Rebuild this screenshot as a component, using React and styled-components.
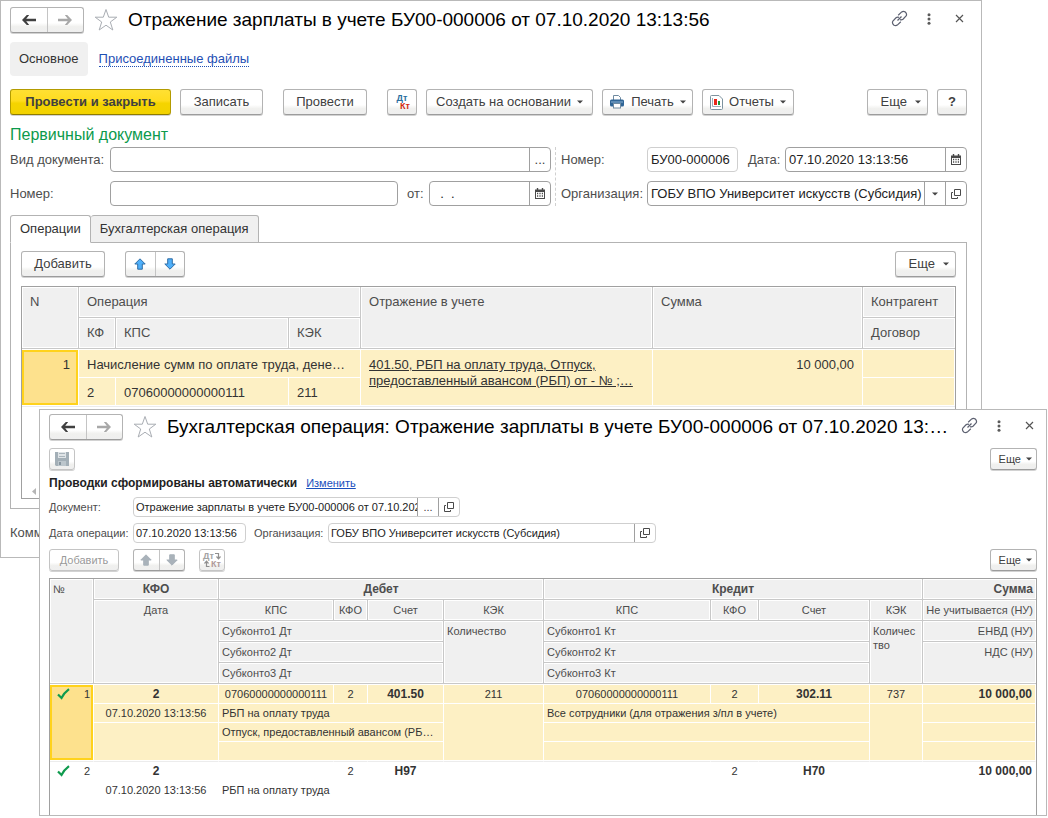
import React from "react";
import styled, { createGlobalStyle, css } from "styled-components";

const GlobalStyle = createGlobalStyle`
  *, *::before, *::after { box-sizing: border-box; }
  body {
    margin: 0;
    background: #fff;
    color: #404040;
    font: 13px/16px "Liberation Sans", Arial, sans-serif;
  }
  button, input, select { font: inherit; color: inherit; margin: 0; }
  button { cursor: pointer; }
`;

/* ---------- windows ---------- */

const Desktop = styled.main`
  position: relative;
  min-height: 816px;
`;

const Window = styled.section`
  background: #fff;
  border: 1px solid #b9b9b9;
`;

const BackWindow = styled(Window)`
  margin-right: 66px;
  padding: 0 14px 12px 9px;
`;

const FrontWindow = styled(Window)`
  position: absolute;
  top: 409px;
  left: 39px;
  right: 1px;
  padding: 0 9px;
  font-size: 11px;
  line-height: 14px;
`;

const TitleBar = styled.header`
  display: flex;
  align-items: center;
  height: ${(p) => p.$h}px;
`;

const Title = styled.h1`
  flex: 1;
  min-width: 0;
  margin: 0 11px 0 10px;
  overflow: hidden;
  white-space: nowrap;
  text-overflow: ellipsis;
  color: #000;
  font-size: 19px;
  font-weight: 400;
  line-height: 24px;
`;

const WindowTools = styled.div`
  display: flex;
  gap: 12px;
  margin: 0 -1px 3px 0;
`;

const IconButton = styled.button`
  display: grid;
  place-items: center;
  flex: none;
  width: ${(p) => p.$w || 18}px;
  height: ${(p) => p.$h || 18}px;
  padding: 0;
  border: 0;
  background: none;
`;

/* ---------- buttons ---------- */

const Bar = styled.div`
  display: flex;
  align-items: center;
  gap: ${(p) => p.$gap ?? 9}px;
  margin-top: ${(p) => p.$top || 0}px;
`;

const Spacer = styled.div`
  flex: ${(p) => (p.$w ? `0 0 ${p.$w}px` : "1")};
`;

const buttonFace = css`
  border: 1px solid #b3b3b3;
  border-bottom-color: #9c9c9c;
  border-radius: 3px;
  background: linear-gradient(#fff 62%, #f0f0ee 78%, #efefef);
  box-shadow: 0 1px 0 #d2d2d2;
`;

const Button = styled.button`
  ${buttonFace}
  display: flex;
  align-items: center;
  justify-content: center;
  flex: none;
  gap: ${(p) => p.$gap || 6}px;
  width: ${(p) => p.$w}px;
  height: ${(p) => (p.$small ? 22 : 26)}px;
  padding: 0;
  white-space: nowrap;
  ${(p) =>
    p.$primary &&
    css`
      border-color: #b39b00;
      border-bottom-color: #8f7c00;
      background: linear-gradient(#ffe033 0, #ffdc1f 45%, #f5d400 55%, #f2d200);
      font-weight: 700;
    `}
  &:disabled {
    color: #999;
    border-color: #c4c4c4;
    cursor: default;
  }
`;

const MoreButton = styled(Button)`
  justify-content: flex-end;
  padding-right: ${(p) => (p.$small ? 4 : 6)}px;
`;

const ButtonPair = styled.div`
  ${buttonFace}
  display: flex;
  flex: none;
  width: ${(p) => p.$w}px;
  height: ${(p) => (p.$small ? 22 : 26)}px;
  overflow: hidden;
  button {
    display: grid;
    place-items: center;
    flex: 1;
    padding: 0;
    border: 0;
    background: none;
  }
  button + button {
    border-left: 1px solid #c4c4c4;
  }
`;

const DtKt = styled.span`
  display: grid;
  width: 16px;
  font-size: 9px;
  line-height: 8px;
  font-weight: 700;
  span:first-child { color: #2a6e9e; }
  span:last-child { color: #d02a10; justify-self: end; }
`;

/* ---------- navigation and tabs ---------- */

const Nav = styled.nav`
  display: flex;
  align-items: center;
  gap: 11px;
  margin-top: 3px;
`;

const NavCurrent = styled.span`
  padding: 9px;
  border-radius: 4px;
  background: #f0f0f0;
  color: #333;
`;

const NavLink = styled.a`
  color: #1f4fb4;
  text-decoration: none;
  border-bottom: 1px dotted #1f4fb4;
  line-height: 14px;
`;

const TextLink = styled.a`
  color: #1a4fbd;
`;

const SectionTitle = styled.h2`
  margin: 10px 0 2px;
  color: #0c9a4c;
  font-size: 16px;
  font-weight: 400;
  line-height: 20px;
`;

const TabList = styled.div`
  display: flex;
  position: relative;
  margin-top: 9px;
`;

const Tab = styled.button`
  height: 28px;
  margin: 0 0 -1px;
  padding: 0 9px;
  border: 1px solid #b3b3b3;
  border-radius: 3px 3px 0 0;
  background: #f0f0f0;
  color: #333;
  & + & { border-left: 0; }
  ${(p) =>
    p.$active &&
    css`
      background: #fff;
      border-bottom-color: #fff;
    `}
`;

const Panel = styled.div`
  padding: 8px 10px 9px;
  border: 1px solid #b3b3b3;
`;

/* ---------- fields ---------- */

const Form = styled.form`
  display: flex;
  gap: 4px;
`;

const FormColumn = styled.div`
  display: grid;
  gap: 9px;
  flex: ${(p) => (p.$fixed ? "none" : 1)};
  width: ${(p) => (p.$fixed ? "412px" : "auto")};
  padding-left: ${(p) => (p.$fixed ? 5 : 0)}px;
  border-left: ${(p) => (p.$fixed ? "1px dashed #d0d0d0" : 0)};
`;

const FormRow = styled.div`
  display: flex;
  align-items: center;
  margin-top: ${(p) => p.$top || 0}px;
`;

const Label = styled.label`
  flex: none;
  width: ${(p) => (p.$w ? `${p.$w}px` : "auto")};
  margin-left: ${(p) => p.$left || 0}px;
  color: #4d4d4d;
  white-space: nowrap;
`;

const Field = styled.div`
  display: flex;
  flex: ${(p) => (p.$w ? `0 0 ${p.$w}px` : "1")};
  min-width: 0;
  height: ${(p) => (p.$small ? 20 : 25)}px;
  border: 1px solid ${(p) => (p.$readOnly ? "#cfcfcf" : "#a0a0a0")};
  border-radius: 4px;
  background: #fff;
  overflow: hidden;
  button {
    width: 21px;
    height: auto;
    border-left: 1px solid #a0a0a0;
  }
`;

const Input = styled.input`
  flex: 1;
  min-width: 0;
  width: 0;
  padding: 0 0 0 ${(p) => (p.$small ? 2 : 3)}px;
  border: 0;
  outline: 0;
  background: none;
  color: #222;
`;

const SelectBox = styled.div`
  display: grid;
  grid-template-columns: 1fr 21px;
  flex: 1;
  min-width: 0;
  select {
    grid-area: 1 / 1 / 2 / 3;
    min-width: 0;
    padding: 0 0 0 3px;
    border: 0;
    outline: 0;
    background: none;
    color: #222;
    appearance: none;
  }
  span {
    grid-area: 1 / 2;
    display: grid;
    place-items: center;
    border-left: 1px solid #a0a0a0;
    pointer-events: none;
  }
`;

/* ---------- tables ---------- */

const TableFrame = styled.div`
  margin-top: 9px;
  border: 1px solid #a0a0a0;
  ${(p) => p.$open && "min-height: 237px; border-bottom: 0; margin-top: 7px;"}
`;

const Table = styled.table`
  width: 100%;
  table-layout: fixed;
  border-collapse: separate;
  border-spacing: 0;
  tbody tr:first-child td { border-top: 1px solid #fff; }
  tbody + tbody tr:first-child td { border-top: 1px solid #ececec; }
`;

const Th = styled.th`
  height: ${(p) => (p.$small ? 21 : 31)}px;
  padding: ${(p) => (p.$small ? "3px 3px" : "7px 8px")};
  border-right: 1px solid #c8c8c8;
  border-bottom: 1px solid #c8c8c8;
  box-shadow: inset 1px 1px 0 #fff, inset -1px -1px 0 #fff;
  background: #f0f0f0;
  color: #4d4d4d;
  font-size: ${(p) => (p.$strong ? 12 : p.$small ? 11 : 13)}px;
  font-weight: ${(p) => (p.$strong ? 700 : 400)};
  line-height: ${(p) => (p.$small ? 14 : 16)}px;
  text-align: ${(p) => p.$align || "left"};
  vertical-align: top;
  word-break: ${(p) => (p.$breakWord ? "break-all" : "normal")};
  white-space: ${(p) => (p.$breakWord ? "normal" : "nowrap")};
  ${(p) => p.$edge && "border-right: 0;"}
`;

const Td = styled.td`
  padding: ${(p) => (p.$small ? "1px 3px" : "7px 8px 4px")};
  height: ${(p) => (p.$small ? 19 : 28)}px;
  border-right: 1px solid #fff;
  border-bottom: 1px solid #fff;
  background: ${(p) => (p.$selected ? "#fdf0c4" : "#fff")};
  color: #333;
  overflow: hidden;
  font-size: ${(p) => (p.$strong ? 12 : p.$small ? 11 : 13)}px;
  font-weight: ${(p) => (p.$strong ? 700 : 400)};
  line-height: 16px;
  text-align: ${(p) => p.$align || "left"};
  text-overflow: ellipsis;
  vertical-align: top;
  white-space: nowrap;
`;

const CurrentTd = styled(Td)`
  background: #fde18d;
  box-shadow: inset 0 0 0 2px #ffd21c;
`;

const RowNumber = styled.span`
  display: flex;
  align-items: center;
  justify-content: space-between;
  padding-left: 4px;
`;

const Accounts = styled.a`
  display: block;
  color: #333;
  white-space: pre-line;
`;

const ScrollStrip = styled.div`
  height: 92px;
  display: flex;
  align-items: flex-end;
  padding: 0 0 3px 10px;
  border-top: 1px solid #ececec;
`;

const AutoNote = styled.strong`
  margin-right: 3px;
  color: #222;
  font-size: 12px;
`;

/* ---------- icons ---------- */

const ArrowIcon = ({ back }) => (
  <svg width="14" height="10" viewBox="0 0 14 10" fill={back ? "#404040" : "#a8a8a8"}>
    <path transform={back ? undefined : "rotate(180 7 5)"} d="M0 5 4.800 0H7.200L4.200 3.800H14V6.200H4.200L7.200 10H4.800Z" />
  </svg>
);

const StarIcon = () => (
  <svg width="24" height="24" viewBox="0 0 24 24" fill="#fff" stroke="#a9adb3" strokeWidth="1">
    <path d="M12 1.500 14.700 9.200H22.800L16.300 14 18.800 22 12 17.200 5.200 22 7.700 14 1.200 9.200H9.300Z" />
  </svg>
);

const LinkIcon = () => (
  <svg width="17" height="17" viewBox="0 0 17 17" fill="none" stroke="#5c6070" strokeWidth="1.200">
    <path d="M7.200 5.300 10.700 1.900Q12.300.7 14.300 2 16.300 4 15.100 6L12 9.200Q10.700 10.200 9 9.600" />
    <path d="M9.800 11.700 6.300 15.100Q4.700 16.300 2.700 15 .7 13 1.900 11L5 7.800Q6.300 6.800 8 7.400" />
    <path d="M6.500 10.500 10.500 6.500" />
  </svg>
);

const DotsIcon = () => (
  <svg width="4" height="12" viewBox="0 0 4 12" fill="#5a5a5a">
    <circle cx="2" cy="1.700" r="1.500" />
    <circle cx="2" cy="6" r="1.500" />
    <circle cx="2" cy="10.300" r="1.500" />
  </svg>
);

const CloseIcon = () => (
  <svg width="9" height="9" viewBox="0 0 9 9" stroke="#555" strokeWidth="1.200">
    <path d="M1 1 8 8M8 1 1 8" />
  </svg>
);

const Caret = () => (
  <svg width="6" height="4" viewBox="0 0 6 4" fill="#444">
    <path d="M0 .5H6L3 3.500Z" />
  </svg>
);

const PrinterIcon = () => (
  <svg width="16" height="16" viewBox="0 0 16 16">
    <path d="M4.500 6V1.500H9.500L11.500 3.500V6" fill="#fff" stroke="#6f8aa0" />
    <rect x="1" y="5.500" width="14" height="7" rx="1.500" fill="#2f6596" />
    <path d="M2 8H14" stroke="#8db3d3" />
    <rect x="4.500" y="9.500" width="7" height="4.500" fill="#fff" stroke="#6f8aa0" />
  </svg>
);

const ReportIcon = () => (
  <svg width="13" height="15" viewBox="0 0 13 15">
    <path d="M.5 1.500Q.5.5 1.500.5H9L12.500 4V13.500Q12.500 14.500 11.500 14.500H1.500Q.5 14.500.5 13.500Z" fill="#fff" stroke="#7d929e" />
    <path d="M2.500 3V11.500H11" fill="none" stroke="#9fb0ba" />
    <rect x="4" y="4" width="3" height="6" fill="#e8281a" />
    <rect x="8" y="6" width="2" height="4" fill="#1c9a3c" />
  </svg>
);

const CalendarIcon = () => (
  <svg width="10" height="11" viewBox="0 0 10 11">
    <path d="M0 1.500H10V11H0Z" fill="#4a4a4a" />
    <path d="M2.500 0V2.500M7.500 0V2.500" stroke="#4a4a4a" strokeWidth="1.400" />
    <path d="M1 4H9V10H1Z" fill="#fff" />
    <path d="M2 5.500H8M2 8H8" stroke="#4a4a4a" strokeWidth="1.300" strokeDasharray="1.200 1.200" />
  </svg>
);

const OpenIcon = () => (
  <svg width="10" height="10" viewBox="0 0 10 10" fill="none" stroke="#4a4a4a">
    <path d="M3.500.5H9.500V6.500H3.500Z" />
    <path d="M2 3.500H.5V9.500H6.500V8" />
  </svg>
);

const MoveIcon = ({ down, muted }) => (
  <svg width="12" height="12" viewBox="0 0 12 12" fill={muted ? "#a9b2ba" : "#4fb0fa"} stroke={muted ? "#a9b2ba" : "#2f6da6"}>
    <path
      transform={down ? "rotate(180 6 6)" : undefined}
      strokeLinejoin="round"
      d="M6 .8 11.200 6H8.300V11.200H3.700V6H.8Z"
    />
  </svg>
);

const SaveIcon = () => (
  <svg width="14" height="14" viewBox="0 0 14 14">
    <path d="M0 0H14V14H1L0 13Z" fill="#a3afb7" />
    <rect x="3" y="0" width="8" height="6" fill="#dfe4e7" />
    <path d="M4 1.500H10M4 4.500H10" stroke="#aab5bc" />
    <rect x="3" y="9" width="8" height="5" fill="#bcc6cc" />
    <rect x="4" y="10" width="2" height="3" fill="#8896a0" />
  </svg>
);

const EntriesMark = styled.span`
  display: grid;
  grid-template-columns: auto auto;
  align-items: center;
  justify-content: center;
  column-gap: 1px;
  font-size: 9px;
  line-height: 8px;
  font-weight: 700;
  color: #a3a3a3;
  span:nth-of-type(2) {
    grid-column: 1 / 3;
    display: flex;
    align-items: center;
    justify-content: flex-end;
    gap: 1px;
    color: #b09a9a;
  }
`;

const HookIcon = ({ up }) => (
  <svg width="6" height="8" viewBox="0 0 6 8" fill="none" stroke="#8f8f8f" strokeWidth="1.200">
    {up ? <path d="M.5 3.500 2.500 1.200 4.500 3.500M2.500 1.500V6.500H5.500" /> : <path d="M0 1.500H3.500V6M1.500 4.500 3.500 6.800 5.500 4.500" />}
  </svg>
);

const CheckIcon = () => (
  <svg width="13" height="12" viewBox="0 0 13 12" fill="none" stroke="#0f9b4e" strokeWidth="2.200">
    <path d="M1 6.500 4.500 10Q7 5 12 1.200" />
  </svg>
);

const ScrollLeftIcon = () => (
  <svg width="4" height="7" viewBox="0 0 4 7" fill="#b5b5b5">
    <path d="M4 0V7L0 3.500Z" />
  </svg>
);

/* ---------- shared parts ---------- */

const WindowTitle = ({ children, height }) => (
  <TitleBar $h={height}>
    <ButtonPair $w={74}>
      <button type="button" aria-label="Назад"><ArrowIcon back /></button>
      <button type="button" aria-label="Вперед"><ArrowIcon /></button>
    </ButtonPair>
    <Spacer $w={10} />
    <IconButton type="button" $w={24} $h={24} aria-label="В избранное"><StarIcon /></IconButton>
    <Title>{children}</Title>
    <WindowTools>
      <IconButton type="button" aria-label="Получить ссылку"><LinkIcon /></IconButton>
      <IconButton type="button" aria-label="Меню"><DotsIcon /></IconButton>
      <IconButton type="button" aria-label="Закрыть"><CloseIcon /></IconButton>
    </WindowTools>
  </TitleBar>
);

const More = ({ small }) => (
  <MoreButton type="button" $w={small ? 47 : 61} $small={small} $gap={small ? 5 : 8}>
    Еще <Caret />
  </MoreButton>
);

/* ---------- entries table ---------- */

const entries = [
  {
    number: 1,
    selected: true,
    kfo: "2",
    date: "07.10.2020 13:13:56",
    debit: { kps: "07060000000000111", kfo: "2", account: "401.50", kek: "211", sub: ["РБП на оплату труда", "Отпуск, предоставленный авансом (РБП) от"] },
    credit: { kps: "07060000000000111", kfo: "2", account: "302.11", kek: "737", sub: ["Все сотрудники (для отражения з/пл в учете)"] },
    sum: "10 000,00",
    lines: 3,
  },
  {
    number: 2,
    kfo: "2",
    date: "07.10.2020 13:13:56",
    debit: { kfo: "2", account: "Н97", sub: ["РБП на оплату труда"] },
    credit: { kfo: "2", account: "Н70", sub: [] },
    sum: "10 000,00",
    lines: 1,
  },
];

const SideCells = ({ side, selected }) => (
  <>
    <Td $small $selected={selected} $align="center">{side.kps}</Td>
    <Td $small $selected={selected} $align="center">{side.kfo}</Td>
    <Td $small $selected={selected} $align="center" $strong>{side.account}</Td>
    <Td $small $selected={selected} $align="center">{side.kek}</Td>
  </>
);

const Entry = ({ entry }) => {
  const { selected, lines } = entry;
  const First = selected ? CurrentTd : Td;
  return (
    <tbody>
      <tr>
        <First $small rowSpan={lines + 1}>
          <RowNumber><CheckIcon />{entry.number}</RowNumber>
        </First>
        <Td $small $selected={selected} $align="center" $strong>{entry.kfo}</Td>
        <SideCells side={entry.debit} selected={selected} />
        <SideCells side={entry.credit} selected={selected} />
        <Td $small $selected={selected} $align="right" $strong>{entry.sum}</Td>
      </tr>
      {Array.from({ length: lines }, (_, i) => (
        <tr key={i}>
          {i === 0 && <Td $small $selected={selected} $align="center">{entry.date}</Td>}
          {i === 1 && <Td $small $selected={selected} rowSpan={lines - 1} />}
          <Td $small $selected={selected} colSpan={3}>{entry.debit.sub[i]}</Td>
          {i === 0 && <Td $small $selected={selected} rowSpan={lines} />}
          <Td $small $selected={selected} colSpan={3}>{entry.credit.sub[i]}</Td>
          {i === 0 && <Td $small $selected={selected} rowSpan={lines} />}
          <Td $small $selected={selected} />
        </tr>
      ))}
    </tbody>
  );
};

const EntriesTable = () => (
  <TableFrame $open>
    <Table>
      <colgroup>
        <col width="44" /><col width="125" />
        <col width="115" /><col width="34" /><col width="76" /><col width="100" />
        <col /><col width="48" /><col width="111" /><col width="53" />
        <col width="113" />
      </colgroup>
      <thead>
        <tr>
          <Th $small rowSpan={5}>№</Th>
          <Th $small $strong $align="center">КФО</Th>
          <Th $small $strong $align="center" colSpan={4}>Дебет</Th>
          <Th $small $strong $align="center" colSpan={4}>Кредит</Th>
          <Th $small $strong $align="right" $edge>Сумма</Th>
        </tr>
        <tr>
          <Th $small $align="center" rowSpan={4}>Дата</Th>
          <Th $small $align="center">КПС</Th>
          <Th $small $align="center">КФО</Th>
          <Th $small $align="center">Счет</Th>
          <Th $small $align="center">КЭК</Th>
          <Th $small $align="center">КПС</Th>
          <Th $small $align="center">КФО</Th>
          <Th $small $align="center">Счет</Th>
          <Th $small $align="center">КЭК</Th>
          <Th $small $align="right" $edge>Не учитывается (НУ)</Th>
        </tr>
        <tr>
          <Th $small colSpan={3}>Субконто1 Дт</Th>
          <Th $small rowSpan={3}>Количество</Th>
          <Th $small colSpan={3}>Субконто1 Кт</Th>
          <Th $small $breakWord rowSpan={3}>Количество</Th>
          <Th $small $align="right" $edge>ЕНВД (НУ)</Th>
        </tr>
        <tr>
          <Th $small colSpan={3}>Субконто2 Дт</Th>
          <Th $small colSpan={3}>Субконто2 Кт</Th>
          <Th $small $align="right" $edge rowSpan={2}>НДС (НУ)</Th>
        </tr>
        <tr>
          <Th $small colSpan={3}>Субконто3 Дт</Th>
          <Th $small colSpan={3}>Субконто3 Кт</Th>
        </tr>
      </thead>
      {entries.map((entry) => <Entry key={entry.number} entry={entry} />)}
    </Table>
  </TableFrame>
);

/* ---------- operations table ---------- */

const OperationsTable = () => (
  <TableFrame>
    <Table>
      <colgroup>
        <col width="57" /><col width="37" /><col width="173" /><col width="72" />
        <col /><col width="210" /><col width="92" />
      </colgroup>
      <thead>
        <tr>
          <Th rowSpan={2}>N</Th>
          <Th colSpan={3}>Операция</Th>
          <Th rowSpan={2}>Отражение в учете</Th>
          <Th rowSpan={2}>Сумма</Th>
          <Th $edge>Контрагент</Th>
        </tr>
        <tr>
          <Th>КФ</Th>
          <Th>КПС</Th>
          <Th>КЭК</Th>
          <Th $edge>Договор</Th>
        </tr>
      </thead>
      <tbody>
        <tr>
          <CurrentTd rowSpan={2} $align="right">1</CurrentTd>
          <Td $selected colSpan={3}>Начисление сумм по оплате труда, денежного довольствия</Td>
          <Td $selected rowSpan={2}>
            <Accounts href="#accounts">{"401.50, РБП на оплату труда, Отпуск,\nпредоставленный авансом (РБП) от - № ;…"}</Accounts>
          </Td>
          <Td $selected rowSpan={2} $align="right">10 000,00</Td>
          <Td $selected />
        </tr>
        <tr>
          <Td $selected>2</Td>
          <Td $selected>07060000000000111</Td>
          <Td $selected>211</Td>
          <Td $selected />
        </tr>
      </tbody>
    </Table>
    <ScrollStrip><ScrollLeftIcon /></ScrollStrip>
  </TableFrame>
);

export default function App() {
  return (
    <Desktop>
      <GlobalStyle />
      <BackWindow>
        <WindowTitle height={38}>Отражение зарплаты в учете БУ00-000006 от 07.10.2020 13:13:56</WindowTitle>
        <Nav>
          <NavCurrent>Основное</NavCurrent>
          <NavLink href="#files">Присоединенные файлы</NavLink>
        </Nav>
        <Bar $top={13}>
          <Button type="button" $primary $w={161}>Провести и закрыть</Button>
          <Button type="button" $w={83}>Записать</Button>
          <Spacer $w={2} />
          <Button type="button" $w={84}>Провести</Button>
          <Spacer $w={2} />
          <Button type="button" $w={30} aria-label="Дт Кт"><DtKt><span>Дт</span><span>Кт</span></DtKt></Button>
          <Button type="button" $w={167}>Создать на основании <Caret /></Button>
          <Button type="button" $w={91}><PrinterIcon />Печать <Caret /></Button>
          <Button type="button" $w={92}><ReportIcon />Отчеты <Caret /></Button>
          <Spacer />
          <More />
          <Button type="button" $w={30} aria-label="Справка"><b>?</b></Button>
        </Bar>
        <SectionTitle>Первичный документ</SectionTitle>
        <Form>
          <FormColumn>
            <FormRow>
              <Label htmlFor="kind" $w={100}>Вид документа:</Label>
              <Field>
                <Input id="kind" />
                <IconButton type="button" aria-label="Выбрать">...</IconButton>
              </Field>
            </FormRow>
            <FormRow>
              <Label htmlFor="source-number" $w={100}>Номер:</Label>
              <Field><Input id="source-number" /></Field>
              <Label htmlFor="source-date" $w={22} $left={9}>от:</Label>
              <Field $w={122}>
                <Input id="source-date" defaultValue="  .  ." />
                <IconButton type="button" aria-label="Календарь"><CalendarIcon /></IconButton>
              </Field>
            </FormRow>
          </FormColumn>
          <FormColumn $fixed>
            <FormRow>
              <Label htmlFor="number" $w={86}>Номер:</Label>
              <Field $w={91} $readOnly><Input id="number" readOnly defaultValue="БУ00-000006" /></Field>
              <Label htmlFor="date" $w={37} $left={10}>Дата:</Label>
              <Field>
                <Input id="date" defaultValue="07.10.2020 13:13:56" />
                <IconButton type="button" aria-label="Календарь"><CalendarIcon /></IconButton>
              </Field>
            </FormRow>
            <FormRow>
              <Label htmlFor="company" $w={86}>Организация:</Label>
              <Field>
                <SelectBox>
                  <select id="company"><option>ГОБУ ВПО Университет искусств (Субсидия)</option></select>
                  <span><Caret /></span>
                </SelectBox>
                <IconButton type="button" aria-label="Открыть"><OpenIcon /></IconButton>
              </Field>
            </FormRow>
          </FormColumn>
        </Form>
        <TabList role="tablist">
          <Tab type="button" role="tab" aria-selected="true" $active>Операции</Tab>
          <Tab type="button" role="tab" aria-selected="false">Бухгалтерская операция</Tab>
        </TabList>
        <Panel>
          <Bar>
            <Button type="button" $w={84}>Добавить</Button>
            <Spacer $w={2} />
            <ButtonPair $w={60}>
              <button type="button" aria-label="Вверх"><MoveIcon /></button>
              <button type="button" aria-label="Вниз"><MoveIcon down /></button>
            </ButtonPair>
            <Spacer />
            <More />
          </Bar>
          <OperationsTable />
        </Panel>
        <FormRow $top={11}>
          <Label htmlFor="comment" $w={100}>Комментарий:</Label>
          <Field><Input id="comment" /></Field>
        </FormRow>
      </BackWindow>

      <FrontWindow>
        <WindowTitle height={34}>Бухгалтерская операция: Отражение зарплаты в учете БУ00-000006 от 07.10.2020 13:13:56</WindowTitle>
        <Bar $top={4}>
          <Button type="button" disabled $small $w={26} aria-label="Записать"><SaveIcon /></Button>
          <Spacer />
          <More small />
        </Bar>
        <Bar $top={6} $gap={6}>
          <AutoNote>Проводки сформированы автоматически</AutoNote>
          <TextLink href="#edit">Изменить</TextLink>
        </Bar>
        <FormRow $top={7}>
          <Label htmlFor="document" $w={84}>Документ:</Label>
          <Field $small $readOnly $w={327}>
            <Input $small id="document" readOnly defaultValue="Отражение зарплаты в учете БУ00-000006 от 07.10.2020 13:13:56" />
            <IconButton type="button" aria-label="Выбрать">...</IconButton>
            <IconButton type="button" aria-label="Открыть"><OpenIcon /></IconButton>
          </Field>
        </FormRow>
        <FormRow $top={6}>
          <Label htmlFor="entry-date" $w={84}>Дата операции:</Label>
          <Field $small $readOnly $w={113}><Input $small id="entry-date" readOnly defaultValue="07.10.2020 13:13:56" /></Field>
          <Label htmlFor="entry-company" $w={74} $left={8}>Организация:</Label>
          <Field $small $readOnly $w={328}>
            <Input $small id="entry-company" readOnly defaultValue="ГОБУ ВПО Университет искусств (Субсидия)" />
            <IconButton type="button" aria-label="Открыть"><OpenIcon /></IconButton>
          </Field>
        </FormRow>
        <Bar $top={6} $gap={14}>
          <Button type="button" disabled $small $w={70}>Добавить</Button>
          <ButtonPair $small $w={52}>
            <button type="button" disabled aria-label="Вверх"><MoveIcon muted /></button>
            <button type="button" disabled aria-label="Вниз"><MoveIcon down muted /></button>
          </ButtonPair>
          <Button type="button" disabled $small $w={26} aria-label="Дт Кт">
            <EntriesMark><span>Дт</span><HookIcon /><span><HookIcon up />Кт</span></EntriesMark>
          </Button>
          <Spacer />
          <More small />
        </Bar>
        <EntriesTable />
      </FrontWindow>
    </Desktop>
  );
}
